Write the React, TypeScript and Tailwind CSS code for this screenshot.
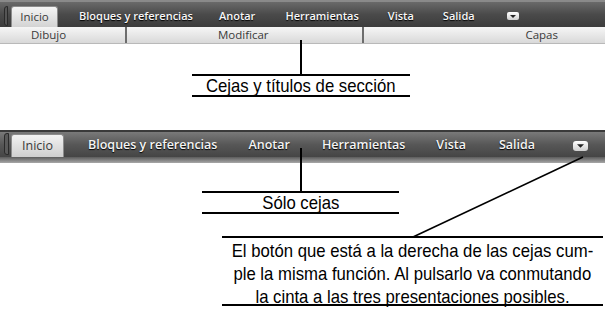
import React from "react";

const tabFont = { fontFamily: '"Open Sans", "Noto Sans", sans-serif' };
const noteFont = { fontFamily: '"Liberation Sans", Arial, sans-serif' };

function MenuBtn({ big }: { big?: boolean }) {
  return (
    <div
      className={
        big
          ? "w-[15px] h-[10px] rounded-[3px] bg-gradient-to-b from-[#ffffff] to-[#cfcfcf] flex items-center justify-center"
          : "w-[12px] h-[8px] rounded-[2px] bg-gradient-to-b from-[#ffffff] to-[#cfcfcf] flex items-center justify-center"
      }
    >
      <svg width={big ? 7 : 6} height={big ? 4 : 3} viewBox="0 0 6 3">
        <path d="M0 0 L6 0 L3 3 Z" fill="#222" />
      </svg>
    </div>
  );
}

function Narrow({ children }: { children: React.ReactNode }) {
  return <span className="inline-block whitespace-nowrap scale-x-[0.88] origin-center">{children}</span>;
}

export default function App() {
  return (
    <div className="relative w-[605px] h-[309px] bg-white overflow-hidden">
      {/* Ribbon 1 */}
      <div className="flex flex-col w-[605px]" style={tabFont}>
        <div className="h-[27px] bg-gradient-to-b from-[#6a6a6a] via-[#4a4a4a] to-[#3c3c3c] border-t-[2px] border-[#8a8a8a] flex items-end text-[11px] font-semibold text-[#f8f8f8]">
          <div className="w-[4px] h-[20px] ml-[4px] mb-[1px] rounded-l-[3px] bg-[#555] border border-[#2a2a2a]" />
          <div className="ml-[3px] w-[47px] h-[21px] rounded-t-[3px] border border-b-0 border-[#8c8c8c] bg-gradient-to-b from-[#f5f5f5] to-[#d3d3d3] text-[#3a3a3a] font-normal text-[11.5px] flex items-center justify-center">
            Inicio
          </div>
          <div className="flex items-center h-[22px] [text-shadow:0_1px_1px_#000]">
            <span className="ml-[21px]">Bloques y referencias</span>
            <span className="ml-[26px]">Anotar</span>
            <span className="ml-[30px]">Herramientas</span>
            <span className="ml-[29px]">Vista</span>
            <span className="ml-[29px]">Salida</span>
            <span className="ml-[32px]"><MenuBtn /></span>
          </div>
        </div>
        <div className="h-[17px] flex text-[11.5px] text-[#3a3a3a] bg-gradient-to-b from-[#f6f6f6] to-[#d9d9d9] border-b border-[#b9b9b9]">
          <div className="w-[125px] pl-[31px] flex items-center">Dibujo</div>
          <div className="w-[237px] border-l-2 border-[#6d6d6d] flex items-center pl-[91px]">Modificar</div>
          <div className="flex-1 border-l-2 border-[#6d6d6d] flex items-center justify-end pr-[47px]">Capas</div>
        </div>
      </div>

      {/* Annotation 1 */}
      <div className="ml-[192px] w-[218px] flex flex-col items-center -mt-[4px]">
        <div className="w-[2px] h-[34px] bg-black" />
        <div
          className="w-[218px] h-[23px] border-t-2 border-b-2 border-black flex items-center justify-center text-[19px] text-black leading-none"
          style={noteFont}
        >
          <Narrow>Cejas y títulos de sección</Narrow>
        </div>
      </div>

      {/* Ribbon 2 */}
      <div className="mt-[33px] w-[605px] flex flex-col" style={tabFont}>
        <div className="h-[2px] bg-[#3a3a3a]" />
        <div className="h-[25px] bg-gradient-to-b from-[#7a7a7a] via-[#575757] to-[#454545] flex items-end text-[12.5px] font-semibold text-[#f4f4f4]">
          <div className="w-[5px] h-[22px] ml-[4px] mb-[2px] rounded-l-[3px] bg-[#5a5a5a] border border-[#2a2a2a]" />
          <div className="ml-[2px] w-[53px] h-[23px] rounded-t-[3px] border border-b-0 border-[#8c8c8c] bg-gradient-to-b from-[#f2f2f2] to-[#cfcfcf] text-[#3a3a3a] font-normal flex items-center justify-center">
            Inicio
          </div>
          <div className="flex items-center h-[23px] [text-shadow:0_1px_1px_#000]">
            <span className="ml-[24px]">Bloques y referencias</span>
            <span className="ml-[31px]">Anotar</span>
            <span className="ml-[32px]">Herramientas</span>
            <span className="ml-[31px]">Vista</span>
            <span className="ml-[33px]">Salida</span>
            <span className="ml-[38px]"><MenuBtn big /></span>
          </div>
        </div>
        <div className="h-[6px] bg-gradient-to-b from-[#5c5c5c] to-[#a8a8a8]" />
      </div>

      {/* Annotation 2 */}
      <div className="ml-[202px] w-[197px] flex flex-col items-center -mt-[15px]">
        <div className="w-[2px] h-[43px] bg-black" />
        <div
          className="w-[197px] h-[23px] border-t-2 border-b-2 border-black flex items-center justify-center text-[19px] text-black leading-none"
          style={noteFont}
        >
          <Narrow>Sólo cejas</Narrow>
        </div>
      </div>

      {/* Annotation 3 */}
      <div
        className="ml-[222px] mt-[22px] w-[381px] h-[70px] border-t-2 border-b-2 border-black flex flex-col items-center justify-start pt-[1px] text-[19px] leading-[23px] text-black text-center"
        style={noteFont}
      >
        <Narrow>El botón que está a la derecha de las cejas cum-</Narrow>
        <Narrow>ple la misma función. Al pulsarlo va conmutando</Narrow>
        <Narrow>la cinta a las tres presentaciones posibles.</Narrow>
      </div>

      {/* Diagonal pointer line */}
      <svg className="absolute left-0 top-0 pointer-events-none" width="605" height="309">
        <line x1="583" y1="157" x2="413" y2="237" stroke="black" strokeWidth="1.6" />
      </svg>
    </div>
  );
}
